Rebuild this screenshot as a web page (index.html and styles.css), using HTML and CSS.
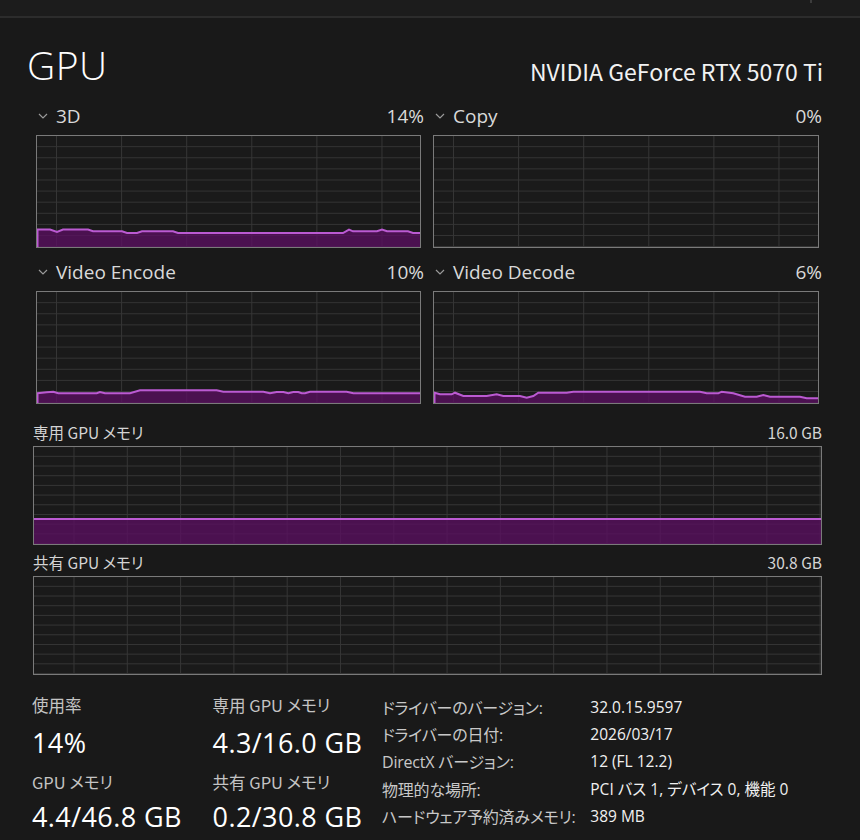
FILE: index.html
```html
<!DOCTYPE html>
<html lang="ja">
<head>
<meta charset="utf-8">
<title>GPU</title>
<link rel="stylesheet" href="styles.css">
</head>
<body>
<div class="topbar"><span class="tick"></span></div>
<div class="page">
  <header class="head">
    <h1 class="title">GPU</h1>
    <div class="model">NVIDIA GeForce RTX 5070 Ti</div>
  </header>

  <section class="engines">
    <div class="engine">
      <div class="eh"><svg class="chev" viewBox="0 0 10 6"><path d="M1 1L5 5L9 1"/></svg><span class="name">3D</span><span class="pct">14%</span></div>
      <div class="chart chart-l">
        <svg class="plot" viewBox="0 0 383 111" preserveAspectRatio="none">
          <polygon class="area" points="0,111 0,93.6 13,93.6 20,96 26,93.6 51,93.6 56,95.3 85,95.3 90,97 100,97 105,95.3 136,95.3 141,97 306,97 312,93.6 316,95.3 340,95.3 345,93.6 350,95.3 371,95.3 376,97 383,97 383,111"/>
          <polyline class="line" points="0.5,111 0.5,93.6 13,93.6 20,96 26,93.6 51,93.6 56,95.3 85,95.3 90,97 100,97 105,95.3 136,95.3 141,97 306,97 312,93.6 316,95.3 340,95.3 345,93.6 350,95.3 371,95.3 376,97 383,97"/>
        </svg>
      </div>
    </div>
    <div class="engine">
      <div class="eh"><svg class="chev" viewBox="0 0 10 6"><path d="M1 1L5 5L9 1"/></svg><span class="name">Copy</span><span class="pct">0%</span></div>
      <div class="chart chart-r"></div>
    </div>
    <div class="engine">
      <div class="eh"><svg class="chev" viewBox="0 0 10 6"><path d="M1 1L5 5L9 1"/></svg><span class="name">Video Encode</span><span class="pct">10%</span></div>
      <div class="chart chart-l">
        <svg class="plot" viewBox="0 0 383 111" preserveAspectRatio="none">
          <polygon class="area" points="0,111 0,101.3 9.7,100.3 16.3,99.7 21.3,101.3 59.7,101.3 63,100 68,101.3 93,101.3 103,98.3 179.7,98.3 186.3,99.7 226.3,99.7 233,101.3 239.7,100 246.3,100 251.3,101.3 256.3,100 261.3,100 264.7,101.3 268,101.3 273,99.7 309.7,99.7 316.3,101.3 383,101.3 383,111"/>
          <polyline class="line" points="0.5,111 0.5,101.3 9.7,100.3 16.3,99.7 21.3,101.3 59.7,101.3 63,100 68,101.3 93,101.3 103,98.3 179.7,98.3 186.3,99.7 226.3,99.7 233,101.3 239.7,100 246.3,100 251.3,101.3 256.3,100 261.3,100 264.7,101.3 268,101.3 273,99.7 309.7,99.7 316.3,101.3 383,101.3"/>
        </svg>
      </div>
    </div>
    <div class="engine">
      <div class="eh"><svg class="chev" viewBox="0 0 10 6"><path d="M1 1L5 5L9 1"/></svg><span class="name">Video Decode</span><span class="pct">6%</span></div>
      <div class="chart chart-r">
        <svg class="plot" viewBox="0 0 384 111" preserveAspectRatio="none">
          <polygon class="area" points="0,111 0,100.7 6,102.3 17.7,102.3 21,100.7 29.3,104 52.7,104 62.7,102.3 69.3,104 86,104 92.7,105.7 99.3,104 104.3,100.7 132.7,100.7 139.3,99.7 266,99.7 272.7,101.3 284.3,101.3 287.7,99.7 299.3,101.3 311,104.7 322.7,104.7 329.3,103 336,104.7 366,104.7 372.7,106.3 384,106.3 384,111"/>
          <polyline class="line" points="0.5,111 0.5,100.7 6,102.3 17.7,102.3 21,100.7 29.3,104 52.7,104 62.7,102.3 69.3,104 86,104 92.7,105.7 99.3,104 104.3,100.7 132.7,100.7 139.3,99.7 266,99.7 272.7,101.3 284.3,101.3 287.7,99.7 299.3,101.3 311,104.7 322.7,104.7 329.3,103 336,104.7 366,104.7 372.7,106.3 384,106.3"/>
        </svg>
      </div>
    </div>
  </section>

  <section class="mem">
    <div class="mh"><span>専用 GPU メモリ</span><span>16.0 GB</span></div>
    <div class="memchart"><div class="memfill" style="height:27%"></div></div>
    <div class="mh mh2"><span>共有 GPU メモリ</span><span>30.8 GB</span></div>
    <div class="memchart"></div>
  </section>

  <section class="stats">
    <div class="kv">
      <div class="k">使用率</div>
      <div class="k">専用 GPU メモリ</div>
      <div class="v">14%</div>
      <div class="v">4.3/16.0 GB</div>
      <div class="k">GPU メモリ</div>
      <div class="k">共有 GPU メモリ</div>
      <div class="v">4.4/46.8 GB</div>
      <div class="v">0.2/30.8 GB</div>
    </div>
    <div class="info">
      <div class="ik">ドライバーのバージョン:</div><div class="iv">32.0.15.9597</div>
      <div class="ik">ドライバーの日付:</div><div class="iv">2026/03/17</div>
      <div class="ik">DirectX バージョン:</div><div class="iv">12 (FL 12.2)</div>
      <div class="ik">物理的な場所:</div><div class="iv">PCI バス 1, デバイス 0, 機能 0</div>
      <div class="ik">ハードウェア予約済みメモリ:</div><div class="iv">389 MB</div>
    </div>
  </section>
</div>
</body>
</html>
```

FILE: styles.css
```css
* {
  box-sizing: border-box;
  margin: 0;
  padding: 0;
}

html, body {
  width: 860px;
  height: 840px;
  overflow: hidden;
}

body {
  background: #191919;
  color: #e8e8e8;
  font-family: "Open Sans", "Noto Sans CJK JP", sans-serif;
  font-feature-settings: "palt";
}

.topbar {
  height: 18px;
  background: #1c1c1c;
  border-bottom: 2px solid #2c2c2c;
  display: flex;
}

.tick {
  margin-left: 810px;
  width: 2px;
  height: 3px;
  background: #3c3c3c;
}

.head {
  display: flex;
  justify-content: space-between;
  align-items: flex-end;
  margin-top: 25px;
  height: 44px;
  padding: 0 37px 0 27px;
}

.title {
  font-family: "Open Sans", sans-serif;
  font-weight: 300;
  font-size: 39px;
  letter-spacing: 0.5px;
  line-height: 44px;
  color: #ffffff;
}

.model {
  font-family: "Noto Sans CJK JP", sans-serif;
  font-size: 23px;
  line-height: 30px;
  color: #f2f2f2;
  padding-bottom: 1px;
}

.engines {
  display: grid;
  grid-template-columns: 388px 389px;
  column-gap: 9px;
  row-gap: 12px;
  margin: 17px 0 0 36px;
}

.eh {
  display: flex;
  align-items: center;
  height: 24px;
  margin-bottom: 7px;
  font-size: 19px;
  color: #d9d9d9;
}

.chev {
  width: 10px;
  height: 6px;
  margin: 0 8px 0 2px;
  fill: none;
  stroke: #9a9a9a;
  stroke-width: 1.2;
}

.name {
  flex: 1;
}

.chart {
  height: 113px;
  border: 1px solid #7a7a7a;
  background-color: #1a1a1a;
  background-image:
    linear-gradient(90deg, #353535 1px, transparent 1px),
    linear-gradient(0deg, #353535 1px, transparent 1px);
  background-size: 65.1px 100%, 100% 10%;
  background-position: 19px 0, 0 100%;
}

.chart-l { width: 385px; }
.chart-r { width: 386px; }

.plot {
  display: block;
  width: 100%;
  height: 100%;
}

.area {
  fill: rgba(90, 16, 96, 0.78);
}

.line {
  fill: none;
  stroke: #bb5ad2;
  stroke-width: 2;
  vector-effect: non-scaling-stroke;
}

.mem {
  margin: 18px 0 0 33px;
  width: 789px;
}

.mh {
  display: flex;
  justify-content: space-between;
  font-family: "Noto Sans CJK JP", sans-serif;
  font-size: 15.5px;
  line-height: 20px;
  color: #d4d4d4;
  margin-bottom: 4px;
}

.mh2 {
  margin-top: 7px;
}

.memchart {
  height: 99px;
  border: 1px solid #7a7a7a;
  background-color: #1a1a1a;
  background-image:
    linear-gradient(90deg, #353535 1px, transparent 1px),
    linear-gradient(0deg, #353535 1px, transparent 1px);
  background-size: 53.3px 100%, 100% 10%;
  background-position: 39.5px 0, 0 100%;
  display: flex;
  flex-direction: column;
  justify-content: flex-end;
}

.memfill {
  background: rgba(90, 16, 96, 0.78);
  border-top: 2px solid #bb5ad2;
}

.stats {
  display: flex;
  margin: 18px 0 0 32px;
}

.kv {
  display: grid;
  grid-template-columns: 180.6px auto;
  grid-template-rows: 24px 50px 29px 41px;
  width: 350px;
}

.k {
  font-family: "Noto Sans CJK JP", sans-serif;
  font-size: 16.5px;
  color: #c4c4c4;
  display: flex;
  align-items: center;
}

.v {
  font-size: 27px;
  letter-spacing: 0.4px;
  color: #ffffff;
  display: flex;
  align-items: center;
  white-space: nowrap;
}

.info {
  display: grid;
  grid-template-columns: 208.3px auto;
  grid-auto-rows: 27.3px;
}

.ik {
  font-size: 16px;
  letter-spacing: -0.2px;
  color: #c8c8c8;
  display: flex;
  align-items: center;
  white-space: nowrap;
}

.iv {
  font-size: 15.5px;
  color: #f0f0f0;
  display: flex;
  align-items: center;
  white-space: nowrap;
}
```
